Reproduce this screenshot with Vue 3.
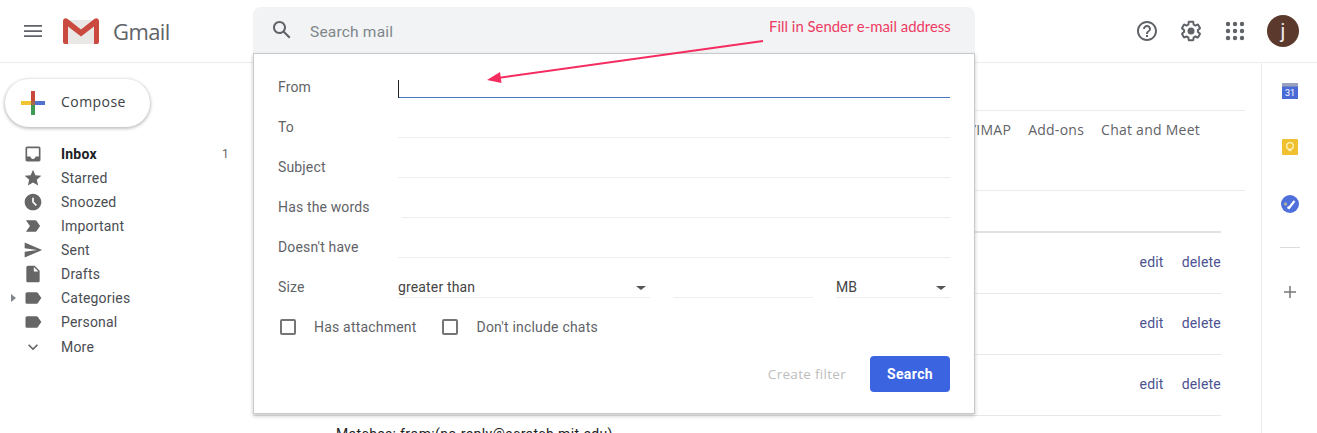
<script setup>
const folders = [
  { name: 'Inbox', count: '1', bold: true, d: 'M19 3H4.99c-1.1 0-1.98.9-1.98 2L3 19c0 1.1.89 2 1.99 2H19c1.1 0 2-.9 2-2V5c0-1.1-.9-2-2-2zm0 12h-4c0 1.66-1.35 3-3 3s-3-1.34-3-3H4.99V5H19v10z' },
  { name: 'Starred', d: 'M12 17.27L18.18 21l-1.64-7.03L22 9.24l-7.19-.61L12 2 9.19 8.63 2 9.24l5.46 4.73L5.82 21z' },
  { name: 'Snoozed', d: 'M11.99 2C6.47 2 2 6.48 2 12s4.47 10 9.99 10C17.52 22 22 17.52 22 12S17.52 2 11.99 2zm3.3 14.71L11 12.41V7h2v4.59l3.71 3.71-1.42 1.41z' },
  { name: 'Important', d: 'M3.5 18.99l11 .01c.67 0 1.27-.33 1.63-.84L20.5 12l-4.37-6.16c-.36-.51-.96-.84-1.63-.84l-11 .01L8.34 12 3.5 18.99z' },
  { name: 'Sent', d: 'M2.01 21L23 12 2.01 3 2 10l15 2-15 2z' },
  { name: 'Drafts', d: 'M6 2c-1.1 0-1.99.9-1.99 2L4 20c0 1.1.89 2 1.99 2H18c1.1 0 2-.9 2-2V8l-6-6H6zm7 7V3.5L18.5 9H13z' },
  { name: 'Categories', arrow: true, d: 'M17.63 5.84C17.27 5.33 16.67 5 16 5L5 5.01C3.9 5.01 3 5.9 3 7v10c0 1.1.9 1.99 2 1.99L16 19c.67 0 1.27-.33 1.63-.84L22 12l-4.37-6.16z' },
  { name: 'Personal', d: 'M17.63 5.84C17.27 5.33 16.67 5 16 5L5 5.01C3.9 5.01 3 5.9 3 7v10c0 1.1.9 1.99 2 1.99L16 19c.67 0 1.27-.33 1.63-.84L22 12l-4.37-6.16z' },
  { name: 'More', more: true, d: 'M7.41 8.59L12 13.17l4.59-4.58L18 10l-6 6-6-6z' }
];
const fields = ['From', 'To', 'Subject', 'Has the words', "Doesn't have"];
const filters = [1, 2, 3];
const gridDots = [5, 12, 19].flatMap((y) => [5, 12, 19].map((x) => ({ x, y })));
</script>

<template>
  <div class="page">
    <header class="topbar">
      <div class="brand">
        <svg class="menu" viewBox="0 0 18 12"><path d="M0 0h18v1.700H0zM0 5.200h18v1.700H0zM0 10.300h18V12H0z" /></svg>
        <svg class="logo" viewBox="0 0 36 26">
          <path d="M1 2h34v22a2 2 0 0 1-2 2H3a2 2 0 0 1-2-2z" fill="#e9e8e6" />
          <path d="M0 3c0-2.5 2.6-3.6 4.4-2.2L18 11.5 31.600.8C33.400-.6 36 .5 36 3v21a2 2 0 0 1-2 2h-3V8.500L18 18.500 5 8.500V26H2a2 2 0 0 1-2-2z" fill="#cb4a3f" />
        </svg>
        <span class="brand-name">Gmail</span>
      </div>

      <div class="search">
        <div class="search-bar">
          <svg class="search-icon" viewBox="0 0 24 24"><path d="M20.49 19l-5.730-5.730C15.530 12.200 16 10.910 16 9.500 16 5.910 13.090 3 9.500 3S3 5.910 3 9.500 5.910 16 9.500 16c1.410 0 2.700-.47 3.770-1.240L19 20.490 20.490 19zM5 9.500C5 7.010 7.010 5 9.500 5S14 7.010 14 9.500 11.990 14 9.500 14 5 11.990 5 9.500z" /></svg>
          <span class="search-text">Search mail</span>
        </div>

        <div class="popup">
          <div v-for="(field, i) in fields" :key="field" class="form-row">
            <span class="form-label">{{ field }}</span>
            <div class="line" :class="{ focused: i === 0, inset: i === 3 }"></div>
          </div>
          <div class="form-row">
            <span class="form-label">Size</span>
            <div class="size-fields">
              <div class="select size-op"><span>greater than</span><i class="caret"></i></div>
              <div class="select size-num"></div>
              <div class="select size-unit"><span>MB</span><i class="caret"></i></div>
            </div>
          </div>
          <div class="checks">
            <span class="box"></span><span class="check-label">Has attachment</span>
            <span class="box second"></span><span class="check-label">Don't include chats</span>
          </div>
          <div class="actions">
            <span class="create">Create filter</span>
            <span class="search-btn">Search</span>
          </div>
        </div>
      </div>

      <div class="top-icons">
        <svg viewBox="0 0 24 24"><path d="M11 18h2v-2h-2v2zm1-16C6.480 2 2 6.480 2 12s4.480 10 10 10 10-4.480 10-10S17.520 2 12 2zm0 18c-4.410 0-8-3.590-8-8s3.590-8 8-8 8 3.590 8 8-3.590 8-8 8zm0-14c-2.210 0-4 1.790-4 4h2c0-1.100.9-2 2-2s2 .9 2 2c0 2-3 1.750-3 5h2c0-2.250 3-2.500 3-5 0-2.210-1.790-4-4-4z" /></svg>
        <svg viewBox="0 0 24 24"><path d="M13.850 22.250h-3.700c-.74 0-1.360-.54-1.450-1.270l-.27-1.890c-.27-.14-.53-.29-.79-.46l-1.800.72c-.7.26-1.470-.03-1.810-.65L2.200 15.530c-.35-.66-.2-1.440.36-1.880l1.530-1.190c-.01-.15-.02-.3-.02-.46 0-.15.01-.31.02-.46l-1.520-1.190c-.59-.45-.74-1.260-.37-1.880l1.850-3.190c.34-.62 1.110-.9 1.790-.63l1.810.73c.26-.17.52-.32.78-.46l.27-1.910c.09-.7.71-1.250 1.440-1.250h3.700c.74 0 1.360.54 1.450 1.270l.27 1.890c.27.14.53.29.79.46l1.800-.72c.71-.26 1.480.03 1.820.65l1.840 3.180c.36.66.2 1.440-.36 1.880l-1.520 1.190c.01.15.02.3.02.46s-.01.31-.02.46l1.520 1.190c.56.45.72 1.230.37 1.860l-1.860 3.220c-.34.62-1.110.9-1.800.63l-1.800-.72c-.26.17-.52.32-.78.46l-.27 1.910c-.1.68-.72 1.220-1.460 1.220zm-3.230-2h2.760l.37-2.550.53-.22c.44-.18.88-.44 1.340-.78l.45-.34 2.380.96 1.380-2.400-2.030-1.580.07-.56c.03-.26.06-.51.06-.78s-.03-.53-.06-.78l-.07-.56 2.030-1.580-1.390-2.400-2.390.96-.45-.35c-.42-.32-.87-.58-1.330-.77l-.52-.22-.37-2.550h-2.760l-.37 2.550-.53.21c-.44.19-.88.44-1.340.79l-.45.33-2.380-.95-1.390 2.390 2.030 1.580-.07.56a7 7 0 0 0-.06.79c0 .26.02.53.06.78l.07.56-2.030 1.580 1.380 2.400 2.390-.96.45.35c.43.33.86.58 1.330.77l.53.22.38 2.550z" /><circle cx="12" cy="12" r="3.500" /></svg>
        <svg viewBox="0 0 24 24"><circle v-for="dot in gridDots" :key="dot.x + '-' + dot.y" :cx="dot.x" :cy="dot.y" r="2.200" /></svg>
        <div class="avatar">j</div>
      </div>
    </header>

    <div class="body">
      <aside class="sidebar">
        <div class="compose">
          <svg class="plus" viewBox="0 0 24 24">
            <path d="M10 0h4v12h-4z" fill="#c9483b" />
            <path d="M10 14h4v10h-4z" fill="#3f9a55" />
            <path d="M0 10h10v4H0z" fill="#efc534" />
            <path d="M14 10h10v4H14z" fill="#5272cf" />
            <path d="M10 10h4v4h-4z" fill="#a8694a" />
          </svg>
          <span class="compose-text">Compose</span>
        </div>
        <nav class="folders">
          <div v-for="f in folders" :key="f.name" class="folder" :class="{ bold: f.bold, more: f.more }">
            <i class="arrow" :class="{ shown: f.arrow }"></i>
            <svg class="folder-icon" viewBox="0 0 24 24"><path :d="f.d" /></svg>
            <span class="folder-name">{{ f.name }}</span>
            <span v-if="f.count" class="folder-count">{{ f.count }}</span>
          </div>
        </nav>
      </aside>

      <main class="main">
        <div class="title-row"></div>
        <div class="tabs">
          <span class="tab clipped">Forwarding and POP/IMAP</span>
          <span class="tab">Add-ons</span>
          <span class="tab">Chat and Meet</span>
        </div>
        <div class="sub-row"></div>
        <div class="filter-list">
          <div v-for="n in filters" :key="n" class="filter">
            <a class="link">edit</a>
            <a class="link">delete</a>
          </div>
          <div class="matches">Matches: from:(no-reply@scratch.mit.edu)</div>
        </div>
      </main>

      <aside class="rail">
        <svg class="rail-icon" viewBox="0 0 16 16">
          <path d="M0 0h16v16H0z" fill="#4a6bd6" />
          <path d="M0 0h16v3.500H0z" fill="#9aa3bd" />
          <text x="8" y="13" text-anchor="middle" class="cal-text">31</text>
        </svg>
        <svg class="rail-icon" viewBox="0 0 16 16">
          <path d="M1 0h14a1 1 0 0 1 1 1v14a1 1 0 0 1-1 1H1a1 1 0 0 1-1-1V1a1 1 0 0 1 1-1z" fill="#efc02f" />
          <circle cx="8" cy="7" r="3.300" fill="none" stroke="#fff3c4" stroke-width="1.300" />
          <path d="M6.500 11.500h3" stroke="#fff3c4" stroke-width="1.300" />
        </svg>
        <svg class="rail-icon tasks" viewBox="0 0 18 18">
          <circle cx="9" cy="9" r="9" fill="#4f6fdb" />
          <circle cx="4.500" cy="9" r="1.700" fill="#a9b3a0" />
          <path d="M6.500 12l1.500 1 5.500-7" fill="none" stroke="#fff" stroke-width="2.200" />
        </svg>
        <div class="rail-sep"></div>
        <svg class="rail-plus" viewBox="0 0 12 12"><path d="M5.250 0h1.500v5.250H12v1.500H6.750V12h-1.500V6.750H0v-1.500h5.250z" /></svg>
      </aside>
    </div>

    <div class="note">Fill in Sender e-mail address</div>
    <svg class="note-arrow" viewBox="0 0 290 50" width="290" height="50">
      <path d="M277 4L12 41" stroke="#f52c60" stroke-width="2" />
      <path d="M1 43l13-8 1.500 11z" fill="#f52c60" />
    </svg>
  </div>
</template>

<style scoped>
.page {
  position: relative;
  width: 1317px;
  height: 433px;
  overflow: hidden;
  background: #fff;
  font-family: Roboto, 'Liberation Sans', sans-serif;
  font-size: 14px;
  color: #3c4043;
}

.topbar {
  display: flex;
  height: 62px;
  border-bottom: 1px solid #ececec;
}

.brand {
  display: flex;
  align-items: center;
  width: 253px;
  padding-left: 24px;
  box-sizing: border-box;
}

.menu {
  width: 18px;
  height: 12px;
  fill: #5f6368;
}

.logo {
  width: 36px;
  height: 26px;
  margin-left: 21px;
}

.brand-name {
  margin-left: 14px;
  font-family: 'Open Sans', sans-serif;
  font-size: 22px;
  letter-spacing: -0.6px;
  color: #5f6368;
}

.search {
  position: relative;
  width: 722px;
  margin-top: 7px;
  z-index: 2;
}

.search-bar {
  display: flex;
  align-items: center;
  height: 46px;
  padding-left: 17px;
  box-sizing: border-box;
  border-radius: 8px 8px 0 0;
  background: #f1f3f4;
}

.search-icon {
  width: 24px;
  height: 24px;
  fill: #5f6368;
}

.search-text {
  margin-left: 16px;
  padding-top: 3px;
  font-size: 15.500px;
  letter-spacing: 0.2px;
  color: #80868b;
}

.popup {
  position: absolute;
  top: 46px;
  left: 0;
  width: 100%;
  height: 361px;
  padding: 4px 24px 0 24px;
  box-sizing: border-box;
  background: #fff;
  border: 1px solid #c9c9c9;
  box-shadow: 0 2px 4px rgba(0, 0, 0, 0.22);
  letter-spacing: 0.15px;
}

.form-row {
  display: flex;
  align-items: flex-end;
  height: 40px;
}

.form-label {
  flex: none;
  width: 120px;
  padding-bottom: 1px;
  line-height: 20px;
  color: #5f6368;
}

.line {
  flex: 1;
  height: 40px;
  box-sizing: border-box;
  border-bottom: 1px solid #eeeeee;
}

.line.inset {
  margin-left: 4px;
}

.line.focused {
  border-bottom-color: #4a78c0;
  position: relative;
}

.line.focused::before {
  content: '';
  position: absolute;
  left: 0;
  bottom: -1px;
  width: 1px;
  height: 18px;
  background: #222;
}

.size-fields {
  flex: 1;
  display: flex;
  height: 40px;
}

.select {
  display: flex;
  align-items: center;
  justify-content: space-between;
  box-sizing: border-box;
  height: 40px;
  padding-top: 19px;
  border-bottom: 1px solid #eeeeee;
  color: #444;
}

.size-op {
  width: 252px;
  padding-right: 4px;
}

.size-num {
  width: 140px;
  margin-left: 23px;
}

.size-unit {
  width: 114px;
  margin-left: 23px;
  padding-right: 4px;
}

.caret {
  margin-top: 2px;
  border-left: 5px solid transparent;
  border-right: 5px solid transparent;
  border-top: 4px solid #555;
}

.checks {
  display: flex;
  align-items: center;
  height: 40px;
  margin-top: 9px;
  padding-left: 2px;
  color: #5f6368;
  letter-spacing: 0.2px;
}

.box {
  flex: none;
  width: 12px;
  height: 12px;
  border: 2px solid #757575;
  border-radius: 2px;
}

.box.second {
  margin-left: 25px;
}

.check-label {
  margin-left: 18px;
}

.box.second + .check-label {
  margin-left: 19px;
}

.actions {
  display: flex;
  justify-content: flex-end;
  align-items: center;
  margin-top: 9px;
}

.create {
  padding-bottom: 1px;
  font-family: 'Open Sans', sans-serif;
  font-weight: 500;
  font-size: 13.500px;
  letter-spacing: 0.3px;
  color: #bdbdbd;
}

.search-btn {
  width: 80px;
  height: 36px;
  margin-left: 24px;
  border-radius: 4px;
  background: #3b64e0;
  color: #fff;
  font-weight: 700;
  letter-spacing: 0.4px;
  line-height: 36px;
  text-align: center;
}

.top-icons {
  display: flex;
  align-items: center;
  margin-left: auto;
  padding-right: 18px;
}

.top-icons svg {
  width: 24px;
  height: 24px;
  margin-right: 20px;
  fill: #5f6368;
}

.avatar {
  width: 32px;
  height: 32px;
  border-radius: 50%;
  background: #5b392d;
  color: #eee;
  font-size: 20px;
  line-height: 32px;
  text-align: center;
}

.body {
  display: flex;
  height: 370px;
}

.sidebar {
  flex: none;
  width: 253px;
}

.compose {
  display: flex;
  align-items: center;
  width: 145px;
  height: 48px;
  margin: 16px 0 0 5px;
  padding-left: 16px;
  box-sizing: border-box;
  border-radius: 24px;
  background: #fff;
  box-shadow: 0 1px 3px 1px rgba(60, 64, 67, 0.3);
  font-family: 'Open Sans', sans-serif;
  font-size: 14px;
  color: #3c4043;
}

.compose-text {
  padding-bottom: 3px;
  letter-spacing: 0.45px;
}

.plus {
  width: 24px;
  height: 24px;
  margin-right: 16px;
}

.folders {
  margin-top: 15px;
}

.folder {
  display: flex;
  align-items: center;
  height: 24px;
  padding-left: 8px;
  color: #4a4d52;
  letter-spacing: 0.2px;
}

.folder.bold {
  color: #202124;
  font-weight: 700;
}

.folder.more {
  height: 26px;
}

.arrow {
  flex: none;
  width: 14px;
}

.arrow.shown {
  width: 0;
  height: 0;
  margin-left: 3px;
  margin-right: 6px;
  border-top: 4px solid transparent;
  border-bottom: 4px solid transparent;
  border-left: 5px solid #80868b;
}

.folder-icon {
  flex: none;
  width: 20px;
  height: 20px;
  margin: 0 1px;
  fill: #666;
}

.folder-name {
  margin-left: 17px;
}

.folder-count {
  margin-left: auto;
  margin-right: 24px;
  font-weight: 400;
  font-size: 12px;
  color: #666;
}

.main {
  flex: 1;
  min-width: 0;
}

.title-row {
  height: 47px;
  margin-right: 16px;
  border-bottom: 1px solid #ececec;
}

.tabs {
  display: flex;
  justify-content: flex-end;
  gap: 17px;
  height: 79px;
  margin-right: 61px;
  padding-top: 9px;
  box-sizing: border-box;
  font-family: 'Open Sans', sans-serif;
  font-size: 14px;
  letter-spacing: 0.25px;
  color: #5f6368;
}

.sub-row {
  height: 40px;
  margin-right: 16px;
  border-top: 1px solid #ececec;
}

.filter-list {
  margin-right: 40px;
  border-top: 2px solid #e2e2e2;
}

.filter {
  display: flex;
  justify-content: flex-end;
  align-items: center;
  gap: 18px;
  height: 61px;
  padding-bottom: 2px;
  box-sizing: border-box;
  border-bottom: 1px solid #e8e8e8;
}

.link {
  color: #4c5290;
  letter-spacing: 0.2px;
}

.matches {
  margin-left: 83px;
  padding-top: 10px;
  letter-spacing: 0.35px;
  color: #222;
}

.rail {
  display: flex;
  flex-direction: column;
  align-items: center;
  flex: none;
  width: 56px;
  border-left: 1px solid #ececec;
  box-sizing: border-box;
  padding-top: 20px;
}

.rail-icon {
  width: 16px;
  height: 16px;
  margin-bottom: 40px;
}

.rail-icon.tasks {
  width: 18px;
  height: 18px;
  margin-bottom: 34px;
}

.cal-text {
  fill: #fff;
  font-family: Roboto, sans-serif;
  font-size: 9px;
}

.rail-sep {
  width: 20px;
  height: 1px;
  background: #dcdcdc;
}

.rail-plus {
  width: 12px;
  height: 12px;
  margin-top: 38px;
  fill: #777;
}

.note {
  position: absolute;
  top: 17px;
  left: 769px;
  z-index: 3;
  font-family: Lato, sans-serif;
  font-size: 14.900px;
  color: #ee3a63;
}

.note-arrow {
  position: absolute;
  top: 37px;
  left: 486px;
  z-index: 3;
}
</style>

<style>
html, body {
  margin: 0;
  overflow: hidden;
  background: #fff;
}
</style>
